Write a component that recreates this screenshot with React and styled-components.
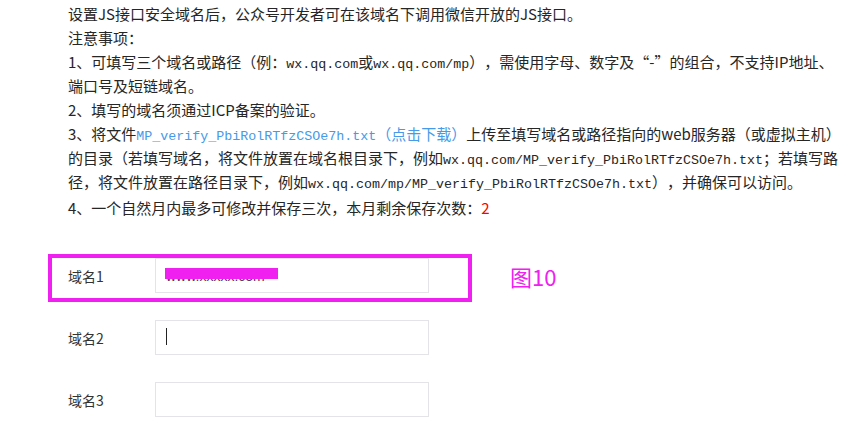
import React from "react";
import styled, { createGlobalStyle } from "styled-components";

const GlobalStyle = createGlobalStyle`
  body {
    margin: 0;
    background: #fff;
  }
`;

const Page = styled.div`
  padding: 2px 0 0 48px;
  font-family: "Noto Sans CJK SC", "Liberation Sans", sans-serif;
  color: #333;
`;

const Notes = styled.div`
  padding-left: 20px;
  font-size: 15px;
  line-height: 24px;
  color: #262626;
  white-space: nowrap;
  text-spacing-trim: space-all;
`;

const Note = styled.p`
  margin: 0;
  height: ${p => (p.$lines || 1) * 24}px;
  margin-top: ${p => (p.$spaced ? "2px" : "0")};
`;

const Mono = styled.span`
  font-family: "Liberation Mono", monospace;
  font-size: 13.33px;
  line-height: 1;
`;

const Link = styled.a`
  color: #459ae9;
  text-decoration: none;
  cursor: pointer;
`;

const Count = styled.span`
  color: #f00;
`;

const Form = styled.div`
  margin-top: 38px;
  padding-left: 20px;
  display: flex;
  flex-direction: column;
  gap: 27px;
`;

const Row = styled.div`
  position: relative;
  display: flex;
  align-items: center;
`;

const Label = styled.label`
  width: 87px;
  font-size: 14px;
  color: #333;
`;

const Field = styled.div`
  position: relative;
  width: 274px;
  height: 35px;
  box-sizing: border-box;
  border: 1px solid #e4e4e8;
  background: #fff;
`;

const TextInput = styled.input`
  width: 100%;
  height: 100%;
  box-sizing: border-box;
  border: none;
  outline: none;
  padding: 0 10px;
  background: transparent;
  font-family: "Liberation Sans", sans-serif;
  font-size: 14px;
  color: #444;
`;

const Redact = styled.span`
  position: absolute;
  left: 9px;
  top: 9px;
  width: 113px;
  height: 11px;
  background: #f020f0;
`;

const Caret = styled.span`
  position: absolute;
  left: 10px;
  top: 7px;
  width: 1px;
  height: 17px;
  background: #222;
`;

// annotation drawn over the screenshot
const Highlight = styled.div`
  position: absolute;
  left: -20px;
  top: -4px;
  width: 424px;
  height: 48px;
  box-sizing: border-box;
  border: 4px solid #f020f0;
  pointer-events: none;
`;

const Caption = styled.span`
  position: absolute;
  left: 442px;
  top: 50%;
  transform: translateY(-50%);
  font-size: 22px;
  color: #f020f0;
  white-space: nowrap;
`;

const FILE = "MP_verify_PbiRolRTfzCSOe7h.txt";

export default function App() {
  return (
    <Page lang="zh-CN">
      <GlobalStyle />
      <Notes>
        <Note>设置JS接口安全域名后，公众号开发者可在该域名下调用微信开放的JS接口。</Note>
        <Note>注意事项：</Note>
        <Note $lines={2}>
          1、可填写三个域名或路径（例：<Mono>wx.qq.com</Mono>或<Mono>wx.qq.com/mp</Mono>），需使用字母、数字及“-”的组合，不支持IP地址、
          <br />
          端口号及短链域名。
        </Note>
        <Note>2、填写的域名须通过ICP备案的验证。</Note>
        <Note $lines={3}>
          3、将文件
          <Link>
            <Mono>{FILE}</Mono>（点击下载）
          </Link>
          上传至填写域名或路径指向的web服务器（或虚拟主机）
          <br />
          的目录（若填写域名，将文件放置在域名根目录下，例如<Mono>wx.qq.com/{FILE}</Mono>；若填写路
          <br />
          径，将文件放置在路径目录下，例如<Mono>wx.qq.com/mp/{FILE}</Mono>），并确保可以访问。
        </Note>
        <Note $spaced>
          4、一个自然月内最多可修改并保存三次，本月剩余保存次数：<Count>2</Count>
        </Note>
      </Notes>

      <Form>
        <Row>
          <Label>域名1</Label>
          <Field>
            <TextInput readOnly value="www.xxxxx.com" />
            <Redact />
          </Field>
          <Highlight />
          <Caption>图10</Caption>
        </Row>
        <Row>
          <Label>域名2</Label>
          <Field>
            <TextInput readOnly value="" />
            <Caret />
          </Field>
        </Row>
        <Row>
          <Label>域名3</Label>
          <Field>
            <TextInput readOnly value="" />
          </Field>
        </Row>
      </Form>
    </Page>
  );
}
